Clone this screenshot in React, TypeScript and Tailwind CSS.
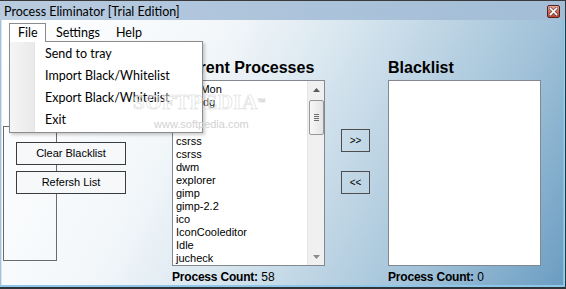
import React from "react";

const processes = [
  "AsusMon",
  "audiodg",
  "avp",
  "cmd",
  "csrss",
  "csrss",
  "dwm",
  "explorer",
  "gimp",
  "gimp-2.2",
  "ico",
  "IconCooleditor",
  "Idle",
  "jucheck",
];

function ScrollBar() {
  return (
    <div className="w-[17px] h-full bg-[#f0f0f0] border-l border-[#e6e6e6] flex flex-col items-center relative">
      <div className="h-[17px] w-full flex items-center justify-center">
        <svg width="7" height="4" viewBox="0 0 7 4">
          <path d="M0 4 L3.5 0 L7 4 Z" fill="#5a5a5a" />
        </svg>
      </div>
      <div className="mt-[2px] w-[15px] h-[35px] rounded-[2px] border border-[#969696] bg-[linear-gradient(to_right,#f7f7f7,#e4e4e4)] flex flex-col items-center justify-center gap-[1px]">
        <div className="w-[5px] h-[1px] bg-[#6e6e6e]" />
        <div className="w-[5px] h-[1px] bg-[#6e6e6e]" />
        <div className="w-[5px] h-[1px] bg-[#6e6e6e]" />
        <div className="w-[5px] h-[1px] bg-[#6e6e6e]" />
      </div>
      <div className="flex-1" />
      <div className="h-[17px] w-full flex items-center justify-center">
        <svg width="7" height="4" viewBox="0 0 7 4">
          <path d="M0 0 L3.5 4 L7 0 Z" fill="#8a8a8a" />
        </svg>
      </div>
    </div>
  );
}

export default function App() {
  const ui = "font-['Lato','Open_Sans',sans-serif]";
  const sans = "font-['Liberation_Sans',Arial,sans-serif]";
  return (
    <div className="w-[566px] h-[289px] overflow-hidden flex flex-col bg-[#a9c1d9] border-t border-t-[#3a3a3a] border-r border-r-[#2f3438] border-b-2 border-b-[#2f3438]">
      {/* Title bar */}
      <div className="h-[19px] flex items-start justify-between pl-[4px] pr-[5px] bg-[linear-gradient(to_right,#b9cbdf,#aac2da_60%,#a3bdd6)]">
        <div className={`${ui} text-[12.5px] leading-[15px] pt-[3px] text-black whitespace-nowrap`}>
          Process Eliminator [Trial Edition]
        </div>
        <div className="mt-[4px] w-[13px] h-[13px] rounded-[2px] border border-[#5a2020] bg-[linear-gradient(to_bottom,#eaa898,#cf6a57_50%,#b8452f)] flex items-center justify-center">
          <svg width="9" height="9" viewBox="0 0 9 9">
            <path d="M1.5 1.5 L7.5 7.5 M7.5 1.5 L1.5 7.5" stroke="#6b4a44" strokeWidth="3" strokeLinecap="square" />
            <path d="M1.5 1.5 L7.5 7.5 M7.5 1.5 L1.5 7.5" stroke="#ffffff" strokeWidth="1.6" strokeLinecap="square" />
          </svg>
        </div>
      </div>

      {/* Body */}
      <div className="h-[265px] flex">
        <div className="w-[2px] h-full bg-[#a6bfd7] border-r border-[#d6e6f2]" />
        <div className="w-[561px] h-full relative flex flex-col bg-[linear-gradient(118deg,#ffffff_0%,#f3f7fa_32%,#dbe8f0_48%,#bdd4e4_64%,#9ec0d7_80%,#6b9dc2_100%)]">
          {/* Menu bar */}
          <div className={`${ui} h-[21px] flex items-start pt-[3px] pl-[7px] text-[12.5px] text-black`}>
            <div className="relative z-20 w-[37px] h-[19px] border-l border-t border-r border-[#8c8c8c] bg-white pl-[8px] leading-[17px]">
              File
            </div>
            <div className="w-[60px] h-[19px] pt-[1px] pl-[10px] leading-[17px]">Settings</div>
            <div className="h-[19px] pt-[1px] pl-[10px] leading-[17px]">Help</div>
          </div>

          {/* Dropdown menu */}
          <div
            className={`${ui} absolute left-[7px] top-[21px] z-10 w-[194px] h-[92px] bg-white border border-[#8c8c8c] shadow-[2px_2px_3px_rgba(0,0,0,0.2)] flex text-[12.5px] text-black`}
          >
            <div className="w-[25px] h-full bg-[linear-gradient(to_right,#f5f5f5,#eaeaea)] border-r border-[#e2e3e3]" />
            <div className="flex-1 pt-[1px] pl-[10px]">
              <div className="h-[22px] leading-[22px]">Send to tray</div>
              <div className="h-[22px] leading-[22px]">Import Black/Whitelist</div>
              <div className="h-[22px] leading-[22px]">Export Black/Whitelist</div>
              <div className="h-[22px] leading-[22px]">Exit</div>
            </div>
          </div>

          {/* Watermark */}
          <div className="absolute left-[131px] top-[71px] z-30 pointer-events-none select-none">
            <div className="font-['Liberation_Serif',serif] text-[21px] leading-[22px] font-bold tracking-[0.5px] text-white/40 [-webkit-text-stroke:0.6px_#dadada] whitespace-nowrap">
              SOFTPEDIA<span className="text-[8px] align-top">™</span>
            </div>
            <div className={`${sans} mt-[5px] ml-[21px] text-[11px] leading-[12px] text-[#d2d2d2] whitespace-nowrap`}>
              www.softpedia.com
            </div>
          </div>

          {/* Content */}
          <div className={`${sans} flex-1 flex text-black`}>
            {/* Left column with group box and buttons */}
            <div className="w-[170px] relative">
              <div className="absolute left-[1px] top-[85px] w-[54px] h-[135px] border border-[#6b6b6b]" />
              <div className="relative z-[1] ml-[14px] mt-[101px] w-[110px] h-[23px] border border-[#3c3c3c] bg-[#f6f8fa] flex items-center justify-center text-[11px]">
                Clear Blacklist
              </div>
              <div className="relative z-[1] ml-[14px] mt-[6px] w-[110px] h-[23px] border border-[#3c3c3c] bg-[#f6f8fa] flex items-center justify-center text-[11px]">
                Refersh List
              </div>
            </div>

            {/* Current processes */}
            <div className="w-[153px] pt-[18px] flex flex-col">
              <div className="text-[16px] leading-[18px] font-bold whitespace-nowrap">Current Processes</div>
              <div className="mt-[3px] h-[186px] border border-[#828790] bg-white flex">
                <div className="flex-1 pl-[3px] pt-[2px] text-[11px] leading-[13px] overflow-hidden">
                  {processes.map((p, i) => (
                    <div key={i} className="h-[13px] whitespace-nowrap">
                      {p}
                    </div>
                  ))}
                </div>
                <ScrollBar />
              </div>
              <div className="mt-[4px] text-[12px] leading-[14px] whitespace-nowrap">
                <span className="font-bold tracking-[-0.2px]">Process Count:</span> 58
              </div>
            </div>

            {/* Arrow buttons */}
            <div className="w-[29px] ml-[16px] pt-[88px] flex flex-col">
              <div className="h-[23px] w-[29px] border border-[#4d4d4d] flex items-center justify-center text-[10px] leading-[10px]">
                &gt;&gt;
              </div>
              <div className="mt-[19px] h-[23px] w-[29px] border border-[#4d4d4d] flex items-center justify-center text-[10px] leading-[10px]">
                &lt;&lt;
              </div>
            </div>

            {/* Blacklist */}
            <div className="w-[153px] ml-[18px] pt-[18px] flex flex-col">
              <div className="text-[16px] leading-[18px] font-bold whitespace-nowrap">Blacklist</div>
              <div className="mt-[3px] h-[186px] border border-[#828790] bg-white" />
              <div className="mt-[4px] text-[12px] leading-[14px] whitespace-nowrap">
                <span className="font-bold tracking-[-0.2px]">Process Count:</span> 0
              </div>
            </div>
          </div>
        </div>
        <div className="w-[2px] h-full bg-[#8fd3f0] border-l border-[#7cc4e6]" />
      </div>
      <div className="h-[2px] bg-[#8fc7ea]" />
    </div>
  );
}
